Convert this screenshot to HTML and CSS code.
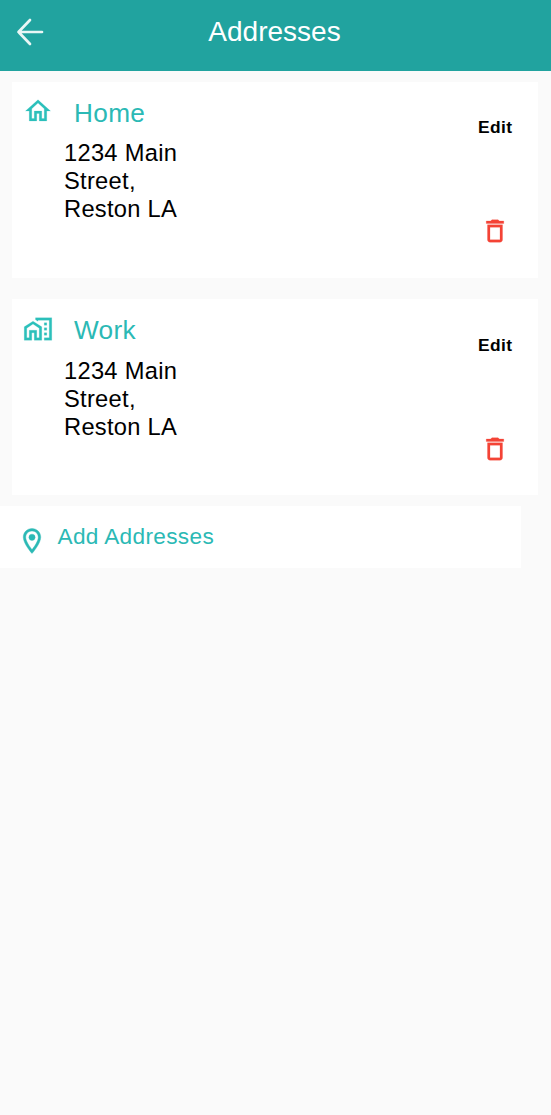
FILE: index.html
```html
<!DOCTYPE html>
<html lang="en">
<head>
<meta charset="utf-8">
<title>Addresses</title>
<link rel="stylesheet" href="styles.css">
</head>
<body>
<header class="bar">
  <svg class="back" viewBox="0 0 28 28"><path d="M26 14H2.500M14 2L2.500 14l11.500 12"/></svg>
  <h1 class="title">Addresses</h1>
</header>
<main>
  <section class="card">
    <svg class="icon icon-home" viewBox="0 0 24 24"><path d="M12 5.690l5 4.500V18h-2v-6H9v6H7v-7.810l5-4.500M12 3L2 12h3v8h6v-6h2v6h6v-8h3L12 3z"/></svg>
    <div class="info">
      <h2 class="name">Home</h2>
      <p class="address">1234 Main<br>Street,<br>Reston LA</p>
    </div>
    <div class="actions">
      <span class="edit">Edit</span>
      <svg class="trash" viewBox="0 0 24 24"><path d="M6 19c0 1.100.9 2 2 2h8c1.100 0 2-.9 2-2V7H6v12zM8 9h8v10H8V9zm7.500-5l-1-1h-5l-1 1H5v2h14V4z"/></svg>
    </div>
  </section>
  <section class="card card-work">
    <svg class="icon icon-work" viewBox="0 0 24 24"><path d="M17 15h2v2h-2zM17 11h2v2h-2zM17 7h2v2h-2zM10 3v1.510l2 1.330V5h9v14h-4v2h6V3z"/><path fill-rule="evenodd" d="M8 5.700L15 10.250V21H9v-6H7v6H1V10.250zM8 8.090L3 11.380V19h2v-6h6v6h2v-7.620z"/></svg>
    <div class="info">
      <h2 class="name">Work</h2>
      <p class="address">1234 Main<br>Street,<br>Reston LA</p>
    </div>
    <div class="actions">
      <span class="edit">Edit</span>
      <svg class="trash" viewBox="0 0 24 24"><path d="M6 19c0 1.100.9 2 2 2h8c1.100 0 2-.9 2-2V7H6v12zM8 9h8v10H8V9zm7.500-5l-1-1h-5l-1 1H5v2h14V4z"/></svg>
    </div>
  </section>
  <section class="add">
    <svg class="pin" viewBox="0 0 24 24"><path d="M12 2C8.130 2 5 5.130 5 9c0 5.250 7 13 7 13s7-7.750 7-13c0-3.870-3.130-7-7-7zM7 9c0-2.760 2.240-5 5-5s5 2.240 5 5c0 2.880-2.880 7.190-5 9.880C9.920 16.210 7 11.850 7 9z"/><circle cx="12" cy="9" r="2.500"/></svg>
    <span class="add-label">Add Addresses</span>
  </section>
</main>
</body>
</html>
```
FILE: styles.css
```css
* { box-sizing: border-box; }
body {
  margin: 0;
  min-height: 100vh;
  background: #fafafa;
  color: #000;
  font-family: "Liberation Sans", Arial, sans-serif;
}
h1, h2, p { margin: 0; font-weight: 400; }
svg { display: block; flex: none; }
.bar {
  display: grid;
  grid-template-columns: 60px 1fr 62px;
  height: 71px;
  background: #21a39f;
  color: #fff;
}
.back {
  width: 28px;
  height: 28px;
  margin: 18px 0 0 16px;
  fill: none;
  stroke: #e9f6f5;
  stroke-width: 2.7;
  stroke-linecap: round;
  stroke-linejoin: round;
}
.title {
  padding-top: 16px;
  text-align: center;
  font-size: 28px;
  line-height: 32px;
}
.card {
  display: flex;
  height: 196px;
  margin: 11px 13px 0 12px;
  background: #fff;
}
.card + .card { margin-top: 21px; }
.icon { width: 30px; height: 30px; margin: 14px 0 0 11px; fill: #2bc0bb; stroke: #2bc0bb; stroke-width: .15; }
.icon-work { margin-top: 15px; }
.info { flex: 1; padding: 16px 0 0 11px; }
.name {
  padding-left: 10px;
  color: #2bb9b5;
  font-size: 26.2px;
  line-height: 30px;
  letter-spacing: .35px;
}
.address {
  margin-top: 11px;
  font-size: 23.7px;
  line-height: 28px;
  letter-spacing: .28px;
}
.card-work .address { margin-top: 12px; }
.actions {
  display: flex;
  flex-direction: column;
  align-items: flex-end;
  padding: 35px 25px 0 0;
}
.card-work .actions { padding-top: 36px; }
.edit { padding-right: .5px; font-size: 17.4px; font-weight: 700; line-height: 20px; letter-spacing: .4px; }
.trash { width: 30px; height: 30px; margin: 79px 3px 0 0; fill: #f44336; stroke: #f44336; stroke-width: .2; }
.add {
  display: flex;
  width: 521px;
  height: 62px;
  margin-top: 11px;
  background: #fff;
  color: #2bb9b5;
}
.pin { width: 30px; height: 30px; margin: 20px 0 0 17px; fill: #2bb9b5; stroke: #2bb9b5; stroke-width: .3; }
.add-label { padding: 18px 0 0 10.5px; font-size: 22.6px; line-height: 26px; letter-spacing: .35px; }
```
